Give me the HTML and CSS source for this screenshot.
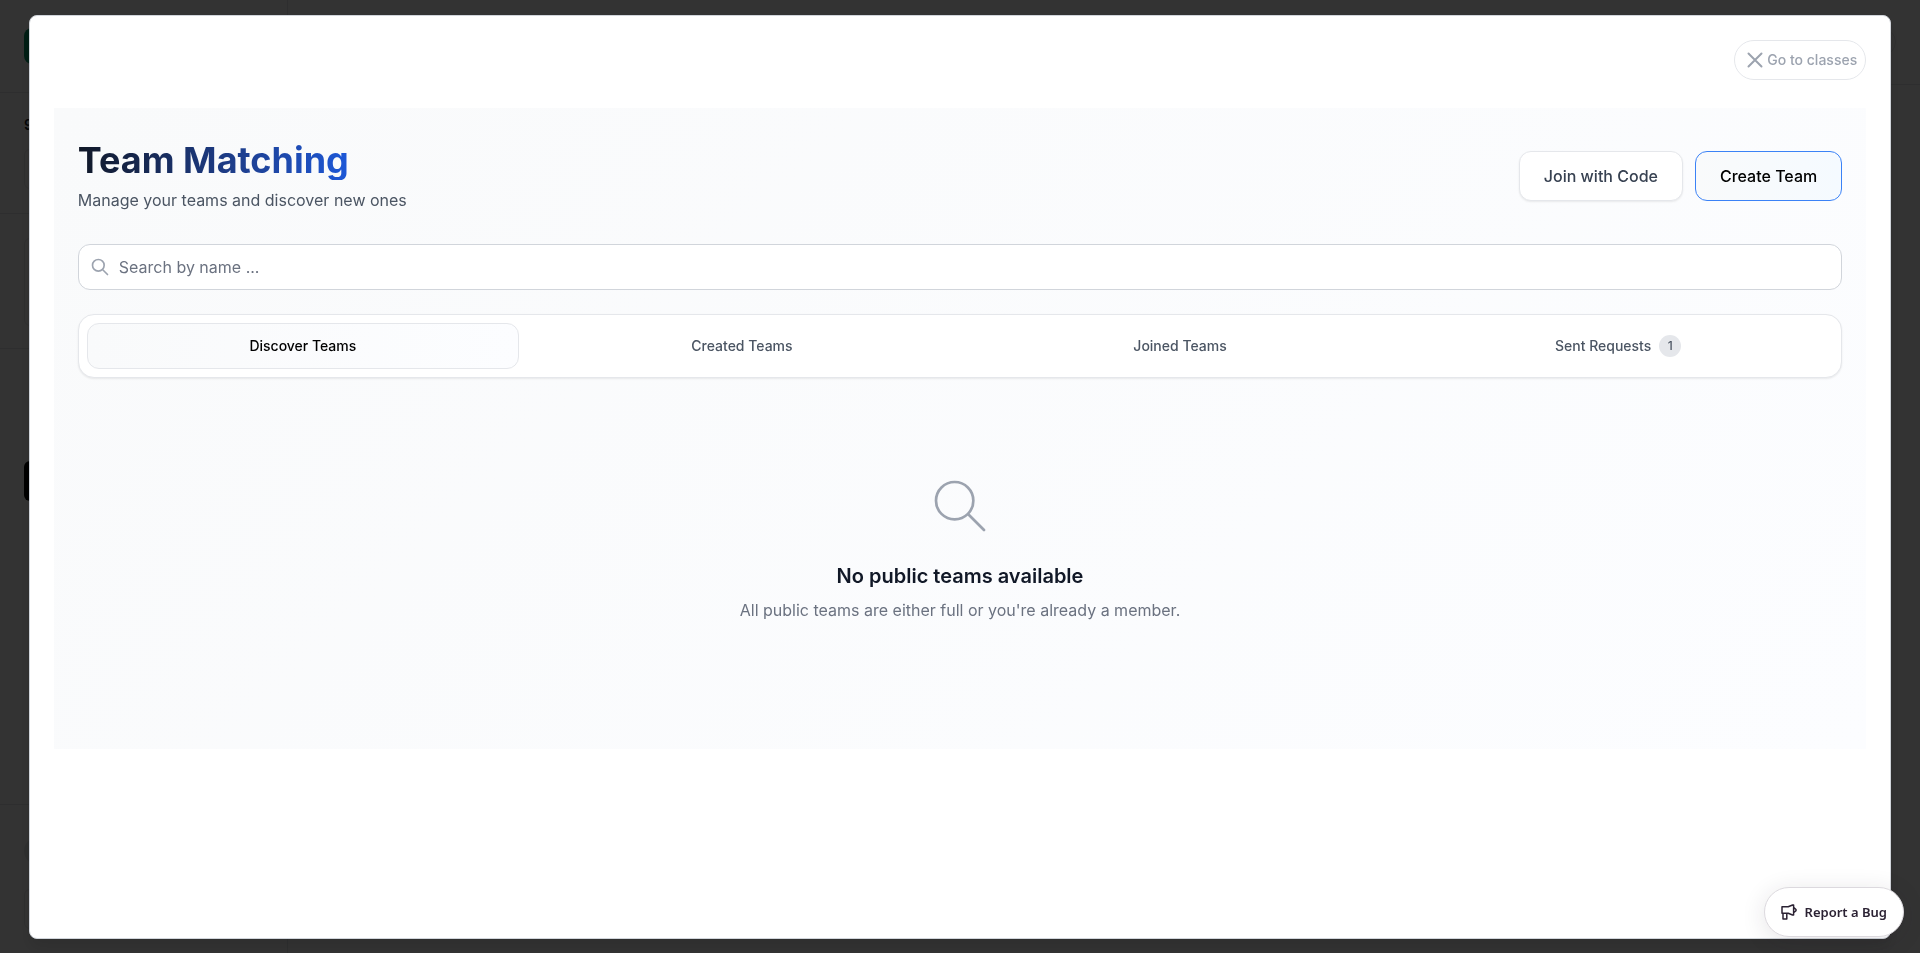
FILE: index.html
```
<!DOCTYPE html>
<html lang="en">
<head>
    <meta charset="UTF-8">
    <meta name="viewport" content="width=device-width, initial-scale=1.0">
    <title>Team Matching</title>
    <link rel="stylesheet" href="styles.css">
</head>
<body>
    <!-- Page behind the modal -->
    <div class="app">
        <aside class="sidebar">
            <div class="side-brand"><span class="brand-logo"></span></div>
            <div class="side-group side-semester">
                <span class="side-label">9</span>
                <span class="side-box"></span>
            </div>
            <div class="side-group side-card"><span class="side-box tall"></span></div>
            <div class="side-group side-nav"><span class="side-active"></span></div>
            <div class="side-user">
                <span class="avatar"></span>
                <span class="side-box"></span>
            </div>
        </aside>
        <div class="main">
            <div class="topbar"><span class="top-circle"></span></div>
        </div>
    </div>

    <div class="overlay">
        <div class="modal" role="dialog" aria-modal="true" aria-labelledby="page-title">
            <div class="modal-header">
                <button type="button" class="close-btn">
                    <svg viewBox="0 0 24 24" aria-hidden="true"><path d="M5.500 5.500l13 13M18.500 5.500l-13 13"/></svg>
                    Go to classes
                </button>
            </div>

            <div class="panel">
                <div class="panel-header">
                    <div>
                        <h1 id="page-title">Team Matching</h1>
                        <p class="subtitle">Manage your teams and discover new ones</p>
                    </div>
                    <div class="actions">
                        <button type="button" class="btn">Join with Code</button>
                        <button type="button" class="btn btn-primary">Create Team</button>
                    </div>
                </div>

                <div class="search">
                    <svg viewBox="0 0 24 24" aria-hidden="true"><path d="M21 21l-6-6m2-5a7 7 0 11-14 0 7 7 0 0114 0z"/></svg>
                    <input type="text" placeholder="Search by name ..." aria-label="Search by name">
                </div>

                <div class="tabs" role="tablist">
                    <button type="button" class="tab active" role="tab" aria-selected="true">Discover Teams</button>
                    <button type="button" class="tab" role="tab">Created Teams</button>
                    <button type="button" class="tab" role="tab">Joined Teams</button>
                    <button type="button" class="tab" role="tab">Sent Requests <span class="badge">1</span></button>
                </div>

                <div class="empty">
                    <svg viewBox="0 0 24 24" aria-hidden="true"><path d="M21 21l-6-6m2-5a7 7 0 11-14 0 7 7 0 0114 0z"/></svg>
                    <h2>No public teams available</h2>
                    <p>All public teams are either full or you're already a member.</p>
                </div>
            </div>
        </div>
    </div>

    <button type="button" class="report-bug">
        <svg viewBox="0 0 16 16" aria-hidden="true"><path d="M1 2.800h6.200L11.600 1h1v10h-1L7.200 9.200H1zM12.600 3.400l2.400 2.100v1.200l-2.400 2.100M2 9.200V15h3.800V9.200"/></svg>
        Report a Bug
    </button>
</body>
</html>
```

FILE: styles.css
```
* {
    box-sizing: border-box;
}
body {
    margin: 0;
    font-family: Inter, "Liberation Sans", sans-serif;
    font-size: 16px;
    line-height: 24px;
    color: #111827;
    background-color: #fff;
}
h1, h2, p {
    margin: 0;
}
button, input {
    font-family: inherit;
}
button {
    cursor: pointer;
}
svg {
    fill: none;
    stroke: currentColor;
    stroke-linecap: round;
    stroke-linejoin: round;
}

/* Page behind the modal */
.app {
    display: flex;
    height: 100vh;
    overflow: hidden;
}
.sidebar {
    display: flex;
    flex-direction: column;
    width: 288px;
    border-right: 1px solid #e5e7eb;
}
.side-brand {
    height: 93px;
    padding: 28px 24px;
    border-bottom: 1px solid #e5e7eb;
}
.brand-logo {
    display: block;
    width: 36px;
    height: 36px;
    border-radius: 8px;
    background-color: #059669;
}
.side-group {
    padding: 20px 24px;
    border-bottom: 1px solid #e5e7eb;
}
.side-semester {
    height: 121px;
}
.side-label {
    display: block;
    height: 36px;
    font-size: 14px;
    font-weight: 600;
}
.side-box {
    display: block;
    height: 40px;
    border: 1px solid #e5e7eb;
    border-radius: 6px;
}
.side-card {
    height: 135px;
    padding-top: 24px;
}
.side-box.tall {
    height: 88px;
}
.side-nav {
    flex: 1;
    padding-top: 112px;
}
.side-active {
    display: block;
    height: 40px;
    border-radius: 6px;
    background-color: #000;
}
.side-user {
    height: 148px;
    padding: 32px 24px;
}
.avatar {
    display: block;
    width: 28px;
    height: 28px;
    margin-bottom: 24px;
    border-radius: 50%;
    background-color: #e5e7eb;
}
.main {
    flex: 1;
}
.topbar {
    display: flex;
    justify-content: flex-end;
    height: 85px;
    padding: 28px 24px;
    border-bottom: 1px solid #e5e7eb;
}
.top-circle {
    width: 28px;
    height: 28px;
    border: 1px solid #e5e7eb;
    border-radius: 50%;
}

/* Modal */
.overlay {
    position: fixed;
    inset: 0;
    display: flex;
    align-items: center;
    justify-content: center;
    background-color: rgba(0, 0, 0, 0.8);
}
.modal {
    width: 97vw;
    height: calc(100vh - 29px);
    padding: 24px;
    overflow: auto;
    background-color: #fff;
    border: 1px solid #d1d5db;
    border-radius: 8px;
    box-shadow: 0 10px 15px rgba(0, 0, 0, 0.1);
}
.modal-header {
    display: flex;
    justify-content: flex-end;
    margin-bottom: 28px;
}
.close-btn {
    display: flex;
    align-items: center;
    height: 40px;
    padding: 0 8px;
    font-size: 14px;
    font-weight: 500;
    color: #9ca3af;
    background-color: #fff;
    border: 1px solid #e5e7eb;
    border-radius: 20px;
}
.close-btn svg {
    width: 24px;
    height: 24px;
    stroke-width: 2;
}

.panel {
    padding: 32px 24px 63px;
    background: linear-gradient(135deg, #f9fafb, #fcfdff);
}
.panel-header {
    display: flex;
    align-items: center;
    justify-content: space-between;
    margin-bottom: 32px;
}
h1 {
    width: fit-content;
    margin-bottom: 8px;
    font-size: 36px;
    line-height: 40px;
    font-weight: 700;
    color: transparent;
    background: linear-gradient(to right, #111827, #1e3f8f 60%, #1d58d8);
    background-clip: text;
    -webkit-background-clip: text;
}
.subtitle {
    color: #4b5563;
}
.actions {
    display: flex;
    gap: 12px;
}
.btn {
    padding: 12px 24px;
    font-size: 16px;
    line-height: 24px;
    font-weight: 500;
    color: #374151;
    background-color: #fff;
    border: 1px solid #e5e7eb;
    border-radius: 12px;
    box-shadow: 0 1px 2px rgba(0, 0, 0, 0.08);
}
.btn-primary {
    color: #000;
    background: linear-gradient(to right, #f9fafb, #f5faff);
    border-color: #3b82f6;
    box-shadow: none;
}

.search {
    position: relative;
    margin-bottom: 24px;
}
.search svg {
    position: absolute;
    top: 13px;
    left: 12px;
    width: 20px;
    height: 20px;
    color: #9ca3af;
    stroke-width: 2;
}
.search input {
    display: block;
    width: 100%;
    height: 46px;
    padding: 0 16px 0 40px;
    font-size: 16px;
    color: #111827;
    background-color: #fff;
    border: 1px solid #d1d5db;
    border-radius: 12px;
}
.search input::placeholder {
    color: #6b7280;
}

.tabs {
    display: flex;
    gap: 8px;
    padding: 8px;
    margin-bottom: 32px;
    background-color: #fff;
    border: 1px solid #e5e7eb;
    border-radius: 16px;
    box-shadow: 0 1px 2px rgba(0, 0, 0, 0.08);
}
.tab {
    display: flex;
    flex: 1;
    align-items: center;
    justify-content: center;
    gap: 8px;
    height: 46px;
    padding: 0 16px;
    font-size: 14px;
    font-weight: 500;
    color: #4b5563;
    background: none;
    border: 0;
    border-radius: 12px;
}
.tab.active {
    color: #000;
    background: linear-gradient(to right, #f9fafb, #fcfdff);
    border: 1px solid #e5e7eb;
}
.badge {
    min-width: 22px;
    padding: 0 4px;
    font-size: 12px;
    line-height: 22px;
    text-align: center;
    background-color: #e5e7eb;
    border-radius: 11px;
}

.empty {
    padding: 64px 0;
    text-align: center;
}
.empty svg {
    display: block;
    width: 64px;
    height: 64px;
    margin: 0 auto 24px;
    color: #9ca3af;
    stroke-width: 1;
}
.empty h2 {
    margin-bottom: 8px;
    font-size: 20px;
    line-height: 28px;
    font-weight: 600;
}
.empty p {
    color: #6b7280;
}

.report-bug {
    position: fixed;
    right: 16px;
    bottom: 16px;
    display: flex;
    align-items: center;
    gap: 8px;
    height: 50px;
    padding: 0 16px;
    font-family: "Noto Sans", "Open Sans", sans-serif;
    font-size: 13px;
    font-weight: 600;
    color: #2b2233;
    background-color: #fff;
    border: 1px solid #dcd9de;
    border-radius: 25px;
    box-shadow: 0 4px 24px rgba(43, 34, 51, 0.12);
}
.report-bug svg {
    width: 16px;
    height: 16px;
    stroke-width: 1.5;
}
```
